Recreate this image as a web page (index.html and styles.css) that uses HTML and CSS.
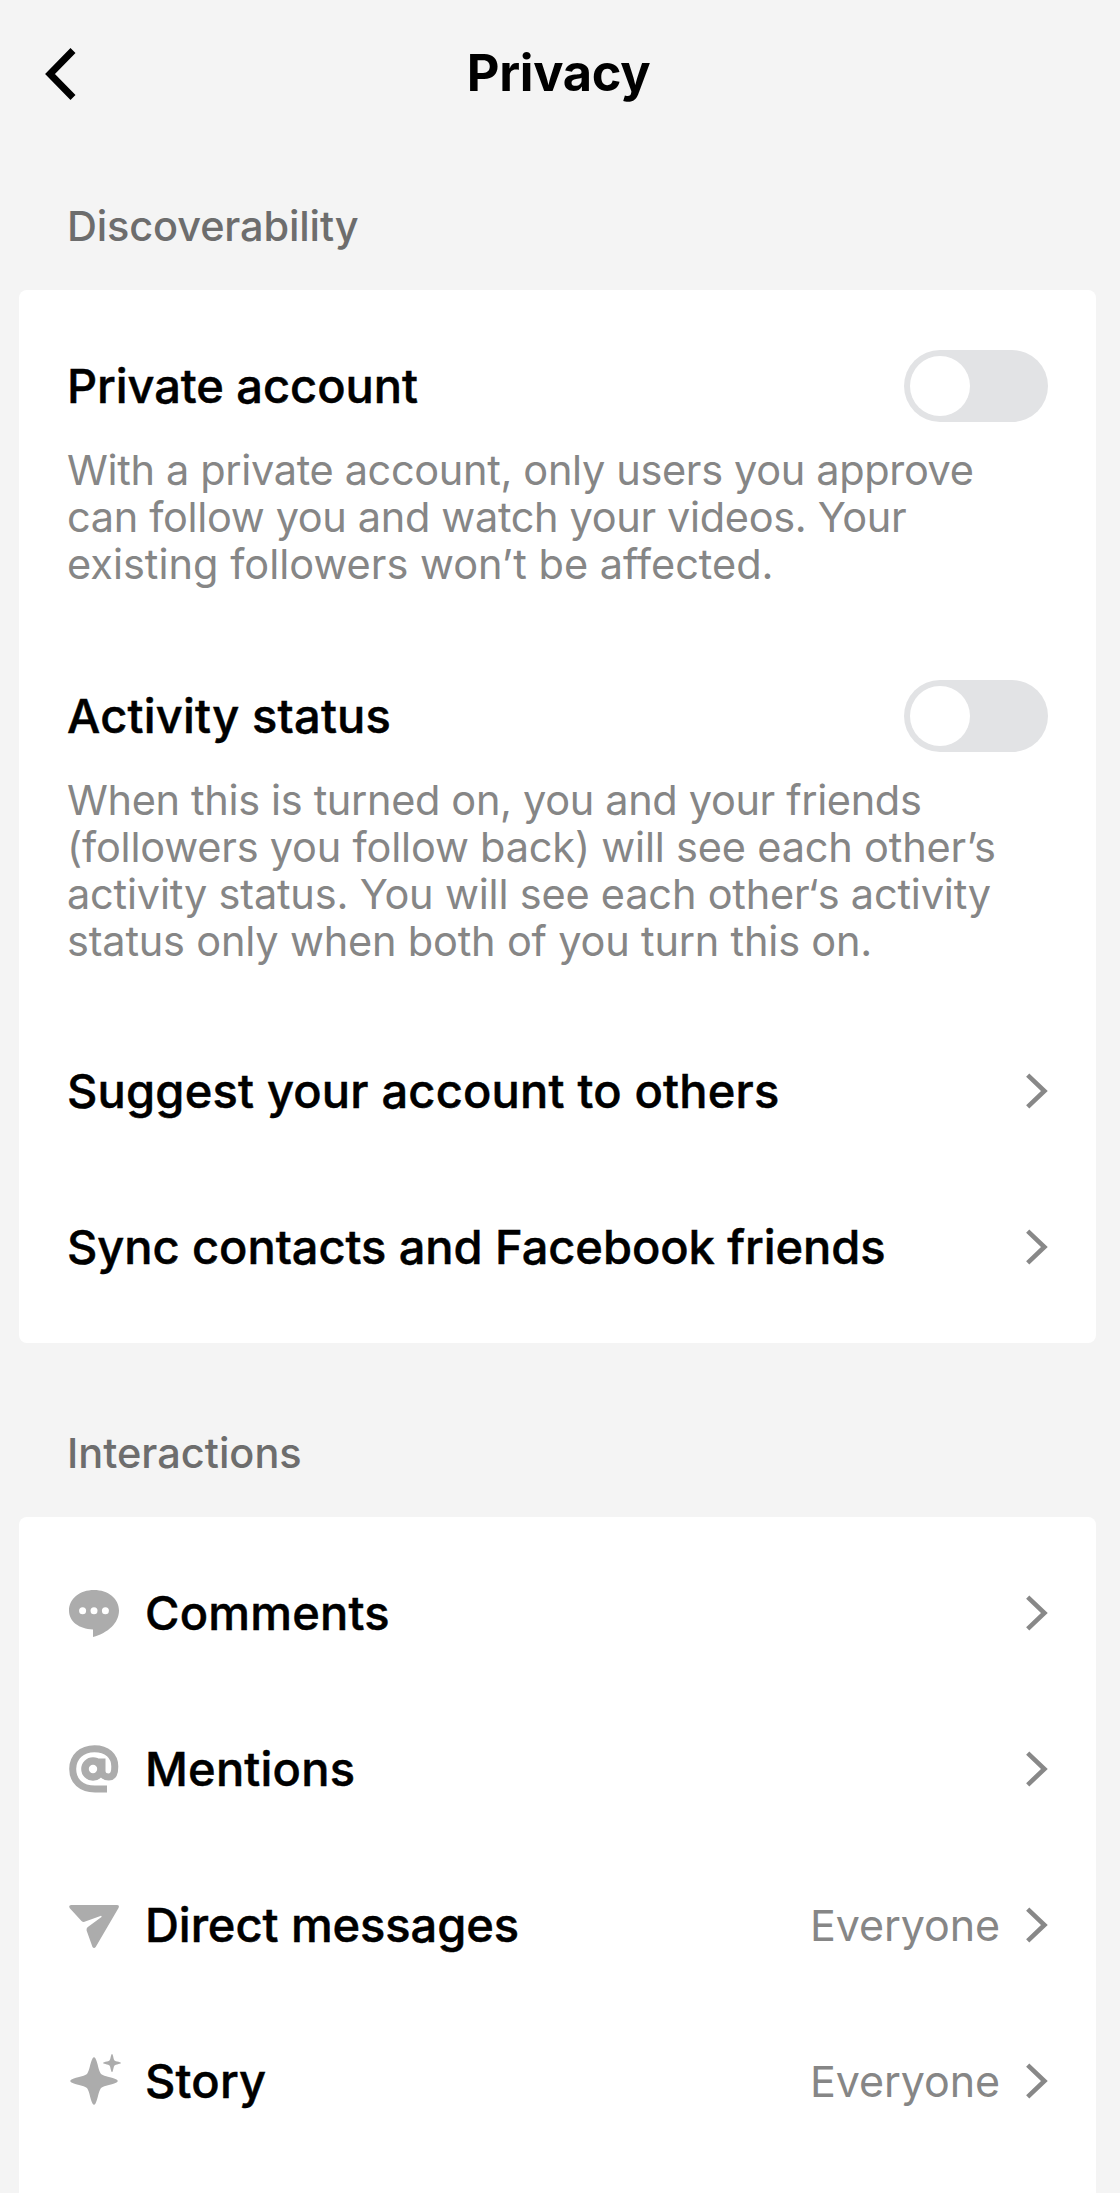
FILE: index.html
```html
<!DOCTYPE html>
<html lang="en">
<head>
<meta charset="utf-8">
<title>Privacy</title>
<link rel="stylesheet" href="styles.css">
</head>
<body>
<svg class="defs" aria-hidden="true">
  <symbol id="chevron" viewBox="0 0 22 36"><path d="M1.7 2.2 18.4 18 1.7 33.8" fill="none" stroke="#888" stroke-width="4.6"/></symbol>
</svg>
<div class="page">
  <header class="header">
    <svg class="back" viewBox="0 0 32 54"><path d="M28 3.500 5 27 28 50.500" fill="none" stroke="#000" stroke-width="7"/></svg>
    <h1 class="title">Privacy</h1>
  </header>

  <h2 class="section-title">Discoverability</h2>
  <section class="card">
    <div class="setting">
      <div class="setting-head"><span class="label snug">Private account</span><span class="toggle"><span class="knob"></span></span></div>
      <p class="desc"><span class="tight">With a private account, only users you approve</span><br><span class="tight">can follow you and watch your videos. Your</span><br>existing followers won’t be affected.</p>
    </div>
    <div class="setting">
      <div class="setting-head"><span class="label">Activity status</span><span class="toggle"><span class="knob"></span></span></div>
      <p class="desc close"><span class="tight">When this is turned on, you and your friends</span><br>(followers you follow back) will see each other’s<br>activity status. You will see each other‘s activity<br>status only when both of you turn this on.</p>
    </div>
    <div class="row"><span class="label">Suggest your account to others</span><svg class="chevron"><use href="#chevron"/></svg></div>
    <div class="row"><span class="label snug">Sync contacts and Facebook friends</span><svg class="chevron"><use href="#chevron"/></svg></div>
  </section>

  <h2 class="section-title spaced">Interactions</h2>
  <section class="card list">
    <div class="row">
      <svg class="icon" viewBox="6 5 56 56"><path d="M34 10C48 10 59 18.500 59 30.500 59 43 48 53 33 57V49.500C19 49 9 41.500 9 30.500 9 18.500 20 10 34 10z"/><g fill="#fff"><circle cx="22.600" cy="30.700" r="3.500"/><circle cx="34" cy="30.700" r="3.500"/><circle cx="45.400" cy="30.700" r="3.500"/></g></svg>
      <span class="label">Comments</span><svg class="chevron"><use href="#chevron"/></svg>
    </div>
    <div class="row">
      <svg class="icon line" viewBox="6 5 56 56"><path d="M47 53H35C21 53 12.700 45 12.700 33S21.500 12.800 34.500 12.800C47 12.800 54.800 20 54.800 30.500 54.800 37.500 53 41 48.800 41 44.500 41 42 38.500 42 35V22.500" stroke-width="7"/><ellipse cx="33" cy="33" rx="8" ry="8" stroke-width="7.600"/></svg>
      <span class="label">Mentions</span><svg class="chevron"><use href="#chevron"/></svg>
    </div>
    <div class="row">
      <svg class="icon" viewBox="6 5 56 56"><path d="M11 13H57Q59.800 13.200 58.500 16L35.700 55Q34 57 32.500 55L26.600 38.500Q26.200 36.500 27.500 35.300L41.500 25Q42 23.700 40.500 23.900L24.500 29.800Q22.800 30.200 21.500 29L9.800 16.200Q8.200 13.500 11 13z"/></svg>
      <span class="label snug">Direct messages</span><span class="value">Everyone</span><svg class="chevron"><use href="#chevron"/></svg>
    </div>
    <div class="row">
      <svg class="icon" viewBox="6 5 56 56"><path d="M32.500 10.500Q34 7.800 35.500 10.500C38.500 17 38 21.500 41 26 45.500 29 50 28.500 56.500 31.500Q59 33 56.500 34.500C50 37.500 45.500 37 41 40 38 44.500 38.500 49 35.500 55.500Q34 58.200 32.500 55.500C29.500 49 30 44.500 27 40 22.500 37 18 37.500 11.500 34.500Q9 33 11.500 31.500C18 28.500 22.500 29 27 26 30 21.500 29.500 17 32.500 10.500z"/><path d="M51.400 6.500Q52 5.500 52.600 6.500C53.700 9.500 53.300 10.500 54.500 12.500 56.500 13.700 57.500 13.300 60.500 14.400Q61.500 15 60.500 15.600C57.500 16.700 56.500 16.300 54.500 17.500 53.300 19.500 53.700 20.500 52.600 23.500Q52 24.500 51.400 23.500C50.300 20.500 50.700 19.500 49.500 17.500 47.500 16.300 46.500 16.700 43.500 15.600Q42.500 15 43.500 14.400C46.500 13.300 47.500 13.700 49.500 12.500 50.700 10.500 50.300 9.500 51.400 6.500z"/></svg>
      <span class="label">Story</span><span class="value">Everyone</span><svg class="chevron"><use href="#chevron"/></svg>
    </div>
  </section>
</div>
</body>
</html>
```
FILE: styles.css
```css
* { box-sizing: border-box; }
body { margin: 0; background: #f4f4f4; font-family: Inter, "Liberation Sans", sans-serif; color: #000; }
.defs { display: none; }
.page { width: 1115px; height: 2193px; overflow: hidden; display: flex; flex-direction: column; }
.header { flex: none; height: 147px; display: grid; grid-template-columns: 77px 1fr 75px; align-items: center; }
.back { width: 32px; height: 54px; margin-left: 45px; }
.title { margin: 0; padding-bottom: 2px; font-size: 50.500px; line-height: 60px; font-weight: 700; text-align: center; letter-spacing: -0.3px; }
.section-title { flex: none; margin: 0; padding: 49px 67px 34px; font-size: 41.500px; line-height: 60px; font-weight: 500; color: #6d6d6d; letter-spacing: -0.15px; }
.section-title.spaced { padding-top: 80px; letter-spacing: 0; }
.card { flex: none; margin: 0 19px; padding-bottom: 18px; background: #fff; border-radius: 8px; }
.card:first-of-type { padding-top: 18px; }
.card.list { height: 700px; padding-top: 18px; border-radius: 8px 8px 0 0; }
.setting { padding: 42px 48px 48px; }
.setting:first-child { padding-bottom: 50px; }
.setting-head { height: 72px; display: flex; align-items: center; justify-content: space-between; }
.label { font-size: 47px; line-height: 60px; font-weight: 500; white-space: nowrap; letter-spacing: 0.2px; -webkit-text-stroke: 0.5px #000; }
.label.snug { letter-spacing: -0.06px; }
.toggle { width: 144px; height: 72px; padding: 6px; border-radius: 36px; background: #e2e3e5; }
.knob { display: block; width: 60px; height: 60px; border-radius: 50%; background: #fff; }
.desc { margin: 25px 0 0; font-size: 41.500px; line-height: 47px; color: #868686; white-space: nowrap; }
.desc.close { letter-spacing: -0.2px; }
.desc .tight { letter-spacing: -0.35px; }
.row { height: 156px; padding: 0 48px; display: flex; align-items: center; }
.icon { width: 56px; height: 56px; margin: 0 23px 0 -1px; fill: #acacac; }
.icon.line { fill: none; stroke: #acacac; }
.chevron { width: 22px; height: 36px; margin-left: auto; }
.value { margin-left: auto; font-size: 43px; line-height: 60px; color: #868686; letter-spacing: -0.1px; }
.value + .chevron { margin-left: 26px; }
```
